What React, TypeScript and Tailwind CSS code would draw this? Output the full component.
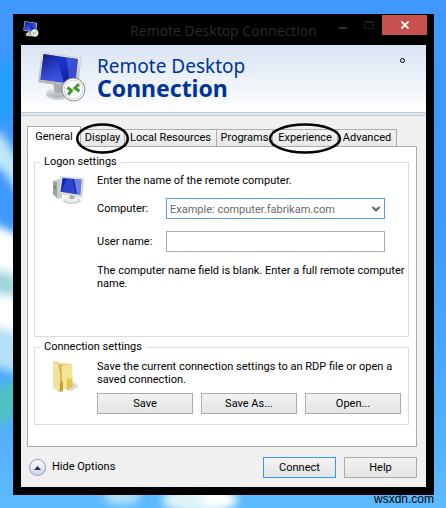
import type { ReactNode } from 'react';
import { ChevronDown } from 'lucide-react';

const tabs = [
    { name: 'General', width: 'w-[54px]' },
    { name: 'Display', width: 'w-[45px]', circled: true },
    { name: 'Local Resources', width: 'w-[93px]' },
    { name: 'Programs', width: 'w-[57px]' },
    { name: 'Experience', width: 'w-[66px]', circled: true },
    { name: 'Advanced', width: 'w-[60px]' },
];

const Wallpaper = () => (
    <svg className="absolute inset-0 w-full h-full" viewBox="0 0 446 508" preserveAspectRatio="none" aria-hidden="true">
        <defs>
            <linearGradient id="sky" x1="0" y1="0" x2="0" y2="1">
                <stop offset="0" stopColor="#3f97ff" />
                <stop offset="0.4" stopColor="#3e98ff" />
                <stop offset="0.75" stopColor="#4fa9ff" />
                <stop offset="1" stopColor="#5cbaff" />
            </linearGradient>
            <filter id="soft" filterUnits="userSpaceOnUse" x="-60" y="-60" width="566" height="628">
                <feGaussianBlur stdDeviation="4" />
            </filter>
        </defs>
        <rect width="446" height="508" fill="url(#sky)" />
        <g filter="url(#soft)">
            <path d="M-20 90 L4 60 L26 50 V100 L0 125Z" fill="#249fff" />
            <path d="M-20 130 L2 134 L26 170 V206 L4 172 L-20 160Z" fill="#c0e6fb" />
            <path d="M-20 218 L26 238 V336 L-20 322Z" fill="#ffffff" />
            <path d="M-20 276 L4 270 L26 284 V298 L-20 292Z" fill="#9ed8dc" />
            <path d="M-20 322 L26 336 V376 L-20 362Z" fill="#b5e0f5" />
            <path d="M-20 396 L26 374 V412 L-20 434Z" fill="#4ec1c4" />
            <ellipse cx="122" cy="497" rx="18" ry="8" fill="#b4e2f4" />
            <ellipse cx="200" cy="500" rx="38" ry="14" fill="#dff4f8" />
            <ellipse cx="218" cy="498" rx="16" ry="10" fill="#ffffff" />
        </g>
    </svg>
);

const RemoteIcon = ({ className }: { className: string }) => (
    <svg className={className} viewBox="0 0 48 50" aria-hidden="true">
        <defs>
            <linearGradient id="screen" x1="0" y1="0" x2="1" y2="0.6">
                <stop offset="0" stopColor="#1320a0" />
                <stop offset="0.5" stopColor="#1c35cf" />
                <stop offset="1" stopColor="#0a1d9c" />
            </linearGradient>
            <linearGradient id="shine" x1="0" y1="0" x2="0.3" y2="1">
                <stop offset="0" stopColor="#0d1480" />
                <stop offset="1" stopColor="#4a66ee" />
            </linearGradient>
            <linearGradient id="metal" x1="0" y1="0" x2="0" y2="1">
                <stop offset="0" stopColor="#f4f4f2" />
                <stop offset="1" stopColor="#a9adae" />
            </linearGradient>
        </defs>
        <ellipse cx="20" cy="42" rx="12" ry="6" fill="#c9cdd0" />
        <ellipse cx="20" cy="40.500" rx="11" ry="5" fill="url(#metal)" />
        <path d="M15 31 L27 33 L25 41 H17Z" fill="#a7abad" />
        <path d="M4 .5 L43 6 L39.500 35.500 L.5 30Z" fill="url(#metal)" stroke="#b6babd" strokeWidth=".6" />
        <path d="M5.500 2 L40 7 L37 32 L2.500 27.500Z" fill="url(#screen)" />
        <path d="M5.500 2 L18 4 L26 30.500 L2.500 27.500Z" fill="url(#shine)" opacity=".7" />
        <path d="M28 5.300 L40 7 L37 32 L32 31.400Z" fill="#5873ea" opacity=".55" />
        <circle cx="35.500" cy="37.500" r="11.500" fill="#f7f7f7" stroke="#8d8d8d" strokeWidth="1" />
        <circle cx="35.500" cy="37.500" r="9.300" fill="#fff" stroke="#cacaca" strokeWidth=".8" />
        <path d="M29.300 35.500 L33.500 38.500 L30.300 42.700" fill="none" stroke="#3a9b30" strokeWidth="3" />
        <path d="M41 32 L37 36 L41.300 39.300" fill="none" stroke="#3a9b30" strokeWidth="3" />
    </svg>
);

const ComputerIcon = () => (
    <svg className="w-8 h-7" viewBox="0 0 32 28" aria-hidden="true">
        <path d="M1 5 L6 3 L10 5 V22 L6 23 L1 18Z" fill="#c9cdcf" />
        <path d="M1 5 L5 6.500 V22 L1 18Z" fill="#9a9fa1" />
        <path d="M2 9.500 L4 10.500 V13 L2 12Z" fill="#3fae3c" />
        <ellipse cx="20" cy="24.500" rx="9" ry="3.500" fill="#cfd2d4" />
        <ellipse cx="19.500" cy="23.700" rx="7" ry="2.500" fill="#eceeee" />
        <path d="M17 18 L23 19 L22 23 H18Z" fill="#a9adaf" />
        <path d="M9 .5 L31.500 2.500 L30 21 L6.500 17.500Z" fill="#dfe1e2" stroke="#b5b9bb" strokeWidth=".5" />
        <path d="M10.500 2 L29.500 3.800 L28.200 18.800 L8.500 15.800Z" fill="#1526b4" />
        <path d="M15 2.400 L20 3 L24 18 L18 17.200 L9 15.600Z" fill="#3c59e0" opacity=".6" />
        <path d="M22 3.100 L29.500 3.800 L28.200 18.800 L25 18.200Z" fill="#8fa4f4" opacity=".7" />
    </svg>
);

const FolderIcon = () => (
    <svg className="w-7 h-8" viewBox="0 0 28 32" aria-hidden="true">
        <path d="M14 29 L22 21 L27 25 L20 30Z" fill="#dcdcdc" />
        <path d="M1 1 L4 0 L7 2 L20 3 V23 L7 29 L1 26Z" fill="#e9d87f" />
        <path d="M6 3 L16 5 V24 L7 31 L5 29Z" fill="#dcc05a" />
        <path d="M1 1 L7 4 L9 14 L8 31 L1 27Z" fill="#f0e29a" />
        <path d="M7 4 L9 14 L8 31" fill="none" stroke="#b99a3c" strokeWidth=".7" />
        <path d="M10 5 L20 3 L21 26 L15 29 L10 26Z" fill="#f3e597" />
        <path d="M8 24 L11 20 V30 L8 31Z" fill="#c39b34" />
        <path d="M15 17 L20 18 L21 26 L15 29Z" fill="#e5c44f" />
    </svg>
);

const PushButton = ({ children, className = 'border-[#acacac]' }: { children: ReactNode; className?: string }) => (
    <button type="button" className={`h-[21px] border bg-linear-to-b from-[#f1f2f1] to-[#e4e6e5] leading-4 ${className}`}>
        {children}
    </button>
);

const TitleBar = () => (
    <div className="grid grid-cols-[1fr_auto_1fr] h-[31px] pt-px">
        <div className="pl-2.5 pt-1.5">
            <RemoteIcon className="w-4 h-4" />
        </div>
        <h1 className="pt-1.5 font-['Open_Sans',sans-serif] text-sm text-[#2b2b2b]">Remote Desktop Connection</h1>
        <div className="flex justify-end items-start pr-[7px]">
            <button type="button" aria-label="Minimize" className="flex justify-center items-center w-[26px] h-5 pt-1.5">
                <span className="w-2 h-0.5 bg-[#2f2f2f]" />
            </button>
            <button type="button" aria-label="Maximize" className="flex justify-center items-center w-[26px] h-5">
                <span className="w-2.5 h-2 border border-t-2 border-[#1c1c1c]" />
            </button>
            <button type="button" aria-label="Close" className="flex justify-center items-center w-[45px] h-5 bg-[#c75050]">
                <svg className="w-2 h-2" viewBox="0 0 8 8" stroke="#fff" strokeWidth="1.800" aria-hidden="true">
                    <path d="M.5 .5 L7.500 7.500 M7.500 .5 L.5 7.500" />
                </svg>
            </button>
        </div>
    </div>
);

const Banner = () => (
    <header className="flex h-[71px] pl-[17px] pr-[21px] pt-[7px] bg-linear-to-b from-[#d9e4f3] to-white border-b-4 border-double border-[#c9cac9]">
        <RemoteIcon className="w-12 h-[50px]" />
        <h2 className="flex-1 pl-[11px] pt-[3px] font-['Noto_Sans',sans-serif] text-[19px] leading-[22px] text-[#003399]">
            Remote Desktop
            <b className="block text-[23px]">Connection</b>
        </h2>
        <span className="w-[5px] h-[5px] mt-1.5 rounded-full border border-black" />
    </header>
);

const TabList = () => (
    <div role="tablist" className="flex items-end">
        {tabs.map((tab, index) => (
            <button
                key={tab.name}
                type="button"
                role="tab"
                aria-selected={index === 0}
                className={`relative border border-[#acacac] leading-4 whitespace-nowrap ${tab.width} ${
                    index === 0 ? 'z-10 h-[21px] bg-white border-b-white' : 'h-[18px] -ml-px bg-linear-to-b from-[#f1f2f1] to-[#e6e8e7]'
                }`}
            >
                {tab.name}
                {tab.circled && (
                    <svg className="absolute z-20 -inset-x-1.5 -top-2 w-[calc(100%+12px)] h-[33px] overflow-visible" aria-hidden="true">
                        <ellipse cx="50%" cy="50%" rx="46%" ry="14" fill="none" stroke="#000" strokeWidth="2.500" />
                    </svg>
                )}
            </button>
        ))}
    </div>
);

const LogonSettings = () => (
    <fieldset className="border border-[#dcdcdc] pl-[17px] pr-[3px] pb-[46px]">
        <legend className="-ml-3 px-1 leading-[14px]">Logon settings</legend>
        <div className="flex pt-[5px]">
            <div className="w-[45px] pt-0.5">
                <ComputerIcon />
            </div>
            <div className="flex-1">
                <p className="leading-[14px]">Enter the name of the remote computer.</p>
                <div className="flex items-center mt-2.5 mr-5">
                    <label htmlFor="computer" className="w-[69px] pt-0.5">Computer:</label>
                    <div className="relative flex flex-1">
                        <input
                            id="computer"
                            type="text"
                            placeholder="Example: computer.fabrikam.com"
                            className="flex-1 min-w-0 h-[21px] pl-[3px] pr-5 pt-0.5 border border-[#569de5] bg-white placeholder:text-[#6a6a6a] outline-none"
                        />
                        <button type="button" aria-label="Show computers" className="absolute right-px top-px bottom-px flex items-center px-0.5">
                            <ChevronDown size={12} strokeWidth={4} color="#606060" />
                        </button>
                    </div>
                </div>
                <div className="flex items-center mt-3 mr-5">
                    <label htmlFor="user" className="w-[69px] pt-0.5">User name:</label>
                    <input id="user" type="text" className="flex-1 min-w-0 h-[21px] px-1 border border-[#ababab] bg-white outline-none" />
                </div>
                <p className="mt-3 leading-[13px]">The computer name field is blank. Enter a full remote computer name.</p>
            </div>
        </div>
    </fieldset>
);

const ConnectionSettings = () => (
    <fieldset className="mt-[3px] border border-[#dcdcdc] pl-[17px] pr-[3px] pb-2.5">
        <legend className="-ml-3 px-1 leading-[14px]">Connection settings</legend>
        <div className="flex pt-1.5">
            <div className="w-[45px] pt-px">
                <FolderIcon />
            </div>
            <div className="flex-1">
                <p className="leading-[13px]">Save the current connection settings to an RDP file or open a saved connection.</p>
                <div className="grid grid-cols-3 gap-2 mt-[7px] mr-1">
                    <PushButton>Save</PushButton>
                    <PushButton>Save As...</PushButton>
                    <PushButton>Open...</PushButton>
                </div>
            </div>
        </div>
    </fieldset>
);

const Footer = () => (
    <footer className="flex items-center gap-2 pt-2.5 pb-[9px]">
        <button type="button" className="flex flex-1 items-center gap-1.5 pl-0.5 text-left">
            <span className="flex justify-center items-center w-[17px] h-[17px] rounded-full border border-[#8f95b5] bg-linear-to-b from-white to-[#cfd3ea]">
                <svg className="w-[7px] h-1" viewBox="0 0 7 4" aria-hidden="true">
                    <path d="M3.500 0 L7 4 H0Z" fill="#2a2f6b" />
                </svg>
            </span>
            Hide Options
        </button>
        <PushButton className="w-[73px] border-[#3399ff]">Connect</PushButton>
        <PushButton className="w-[73px] border-[#acacac]">Help</PushButton>
    </footer>
);

export default function App() {
    return (
        <div className="relative min-h-screen pt-3.5 pr-3 pb-[13px] pl-[13px] font-[Roboto,sans-serif] text-[11px] text-black">
            <Wallpaper />
            <main className="relative bg-black">
                <TitleBar />
                <div className="mx-2 bg-[#eff0ef]">
                    <Banner />
                    <div className="pt-2.5 pl-1.5 pr-[9px]">
                        <TabList />
                        <div role="tabpanel" className="-mt-px pl-1.5 pr-[7px] pt-2 pb-[21px] border border-[#acacac] bg-white">
                            <LogonSettings />
                            <ConnectionSettings />
                        </div>
                        <Footer />
                    </div>
                </div>
                <div className="h-2" />
            </main>
            <p className="absolute right-3 bottom-0.5 font-['Liberation_Sans',sans-serif] text-xs leading-[14px]">wsxdn.com</p>
        </div>
    );
}
